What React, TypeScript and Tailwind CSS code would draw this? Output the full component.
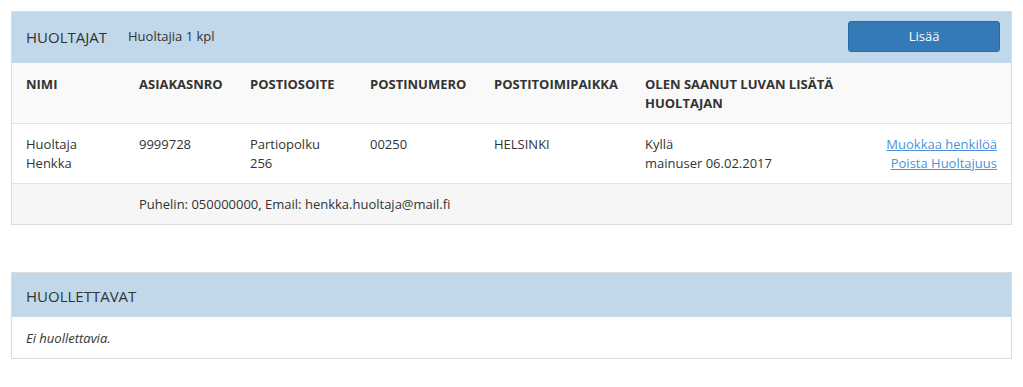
import React from 'react'

interface Guardian {
  name: string
  customerNo: string
  address: string
  postalCode: string
  city: string
  consent: string
  consentBy: string
  phone: string
  email: string
}

const guardians: Guardian[] = [
  {
    name: 'Huoltaja Henkka',
    customerNo: '9999728',
    address: 'Partiopolku 256',
    postalCode: '00250',
    city: 'HELSINKI',
    consent: 'Kyllä',
    consentBy: 'mainuser 06.02.2017',
    phone: '050000000',
    email: 'henkka.huoltaja@mail.fi',
  },
]

const columns = [
  'Nimi',
  'Asiakasnro',
  'Postiosoite',
  'Postinumero',
  'Postitoimipaikka',
  'Olen saanut luvan lisätä huoltajan',
  '',
]

const App = () => {
  return (
    <div className="min-h-[387px] bg-white px-[11px] pt-[11px] text-[13px] leading-[19px] text-[#333] font-['Open_Sans',_sans-serif]">
      {/* Huoltajat panel */}
      <div className="border border-[#dcdcdc]">
        <div className="flex items-center bg-[#c0d8ea] pl-[14px] pr-[11px] pt-[9px] pb-[11px]">
          <span className="text-[15px] leading-[22px]">HUOLTAJAT</span>
          <span className="ml-[21px] text-[13px]">Huoltajia {guardians.length} kpl</span>
          <button className="ml-auto h-[31px] w-[152px] rounded-[3px] border border-[#2e6da4] bg-[#337ab7] text-[13px] text-white">
            Lisää
          </button>
        </div>
        <table className="w-full table-fixed border-collapse">
          <colgroup>
            <col className="w-[127px]" />
            <col className="w-[111px]" />
            <col className="w-[120px]" />
            <col className="w-[124px]" />
            <col className="w-[151px]" />
            <col className="w-[225px]" />
            <col />
          </colgroup>
          <thead>
            <tr className="bg-[#f9f9f9]">
              {columns.map((col, i) => (
                <th
                  key={i}
                  className={`pt-[12px] pb-[10px] pr-[28px] text-left align-top font-bold uppercase ${i === 0 ? 'pl-[14px]' : ''}`}
                >
                  {col}
                </th>
              ))}
            </tr>
          </thead>
          <tbody>
            {guardians.map(g => (
              <React.Fragment key={g.customerNo}>
                <tr className="border-t border-[#e2e2e2] bg-white align-top">
                  <td className="pt-[11px] pb-[10px] pl-[14px] pr-[28px]">{g.name}</td>
                  <td className="pt-[11px] pb-[10px] pr-[28px]">{g.customerNo}</td>
                  <td className="pt-[11px] pb-[10px] pr-[28px]">{g.address}</td>
                  <td className="pt-[11px] pb-[10px] pr-[28px]">{g.postalCode}</td>
                  <td className="pt-[11px] pb-[10px] pr-[28px]">{g.city}</td>
                  <td className="pt-[11px] pb-[10px] pr-[28px]">
                    {g.consent}
                    <br />
                    {g.consentBy}
                  </td>
                  <td className="pt-[11px] pb-[10px] pr-[14px] text-right">
                    <a href="#" className="text-[#4b93dc] underline">Muokkaa henkilöä</a>
                    <br />
                    <a href="#" className="text-[#4b93dc] underline">Poista Huoltajuus</a>
                  </td>
                </tr>
                <tr className="border-t border-[#e2e2e2] bg-[#f6f6f6]">
                  <td />
                  <td colSpan={6} className="pt-[11px] pb-[10px]">
                    Puhelin: {g.phone}, Email: {g.email}
                  </td>
                </tr>
              </React.Fragment>
            ))}
          </tbody>
        </table>
      </div>

      {/* Huollettavat panel */}
      <div className="mt-[47px] border border-[#dcdcdc]">
        <div className="bg-[#c0d8ea] pl-[14px] pt-[12px] pb-[9px] text-[15px] leading-[23px]">
          HUOLLETTAVAT
        </div>
        <div className="pt-[12px] pb-[10px] pl-[14px] italic">Ei huollettavia.</div>
      </div>
    </div>
  )
}

export default App
